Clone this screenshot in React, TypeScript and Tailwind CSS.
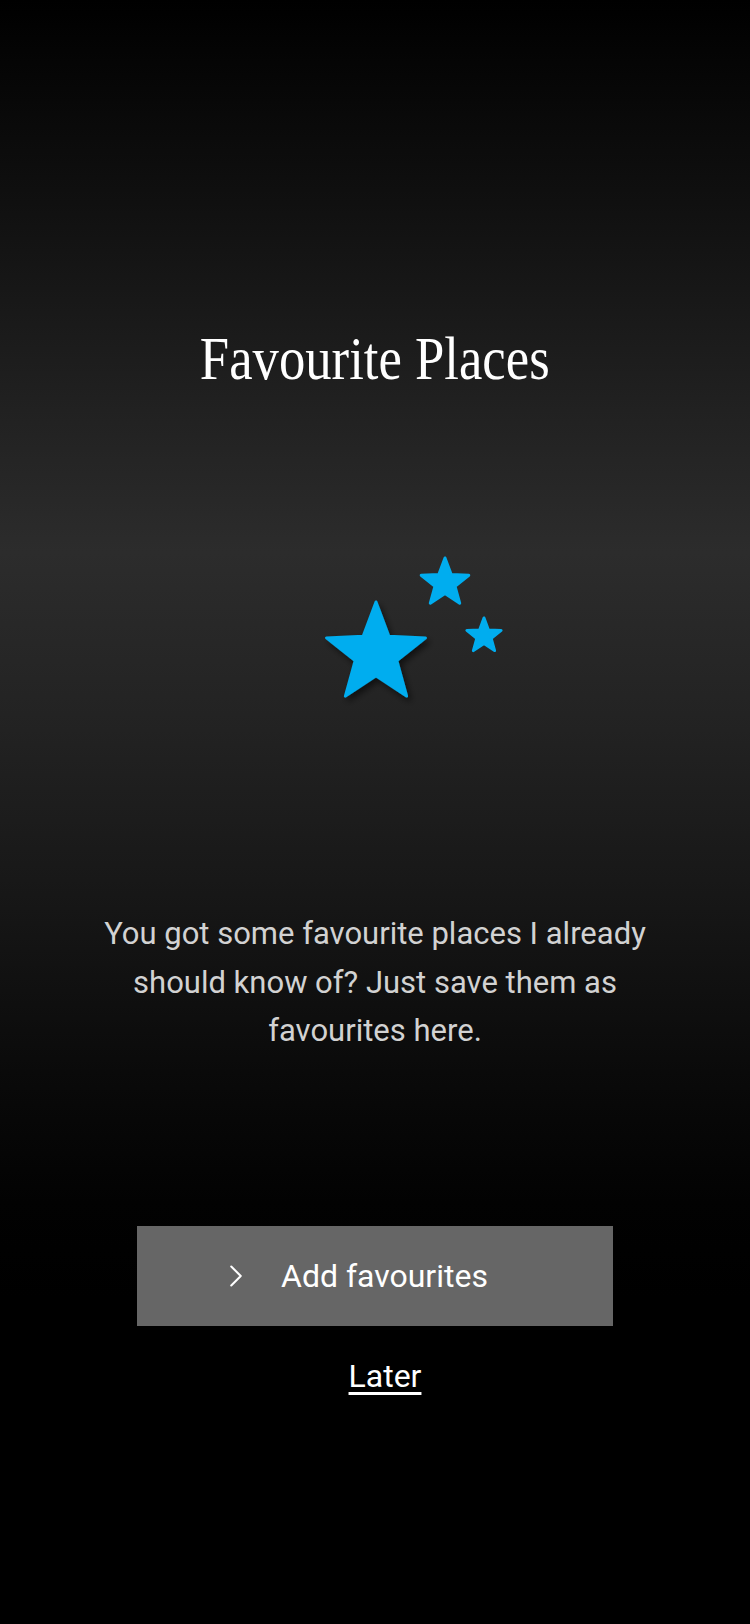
import { ChevronRight } from "lucide-react";

const sans = "font-['Roboto','Liberation_Sans',sans-serif]";

type StarProps = {
  cx: number;
  cy: number;
  r: number;
};

const starPoints = ({ cx, cy, r }: StarProps) => {
  const inner = r * 0.42;
  const pts: string[] = [];
  for (let i = 0; i < 10; i++) {
    const rad = i % 2 === 0 ? r : inner;
    const a = (Math.PI / 5) * i - Math.PI / 2;
    pts.push(`${(cx + rad * Math.cos(a)).toFixed(1)},${(cy + rad * Math.sin(a)).toFixed(1)}`);
  }
  return pts.join(" ");
};

const Stars = () => (
  <svg width="260" height="160" viewBox="0 0 260 160" className="block">
    <defs>
      <filter id="starShadow" x="-30%" y="-30%" width="160%" height="160%">
        <feDropShadow dx="3" dy="4" stdDeviation="3" floodColor="#000" floodOpacity="0.55" />
      </filter>
    </defs>
    <g fill="#00adef" stroke="#00adef" strokeWidth="3" strokeLinejoin="round">
      <polygon points={starPoints({ cx: 131, cy: 104, r: 52 })} filter="url(#starShadow)" />
      <polygon points={starPoints({ cx: 200, cy: 33, r: 25 })} />
      <polygon points={starPoints({ cx: 239, cy: 86, r: 18 })} />
    </g>
  </svg>
);

export default function App() {
  return (
    <div className="min-h-[1624px] w-[750px] bg-[linear-gradient(180deg,#000_0%,#121212_14%,#222_26%,#2c2c2c_34%,#232323_44%,#161616_56%,#0a0a0a_66%,#020202_74%,#000_80%)] flex flex-col items-center">
      <h1 className="mt-[326px] h-[64px] text-[62px] leading-[64px] text-white font-['Liberation_Serif',serif] font-normal scale-x-[0.85] whitespace-nowrap">
        Favourite Places
      </h1>

      <div className="mt-[160px]">
        <Stars />
      </div>

      <p
        className={`mt-[200px] w-[580px] text-center text-[31px] leading-[48.5px] text-[#d2d2d2] ${sans}`}
      >
        You got some favourite places I already should know of? Just save them as favourites here.
      </p>

      <button
        type="button"
        className={`mt-[170px] flex h-[100px] w-[476px] items-center bg-[#666] pl-[80px] text-[32px] text-white ${sans}`}
      >
        <ChevronRight className="h-[38px] w-[38px] shrink-0" strokeWidth={1.3} />
        <span className="ml-[26px]">Add favourites</span>
      </button>

      <button
        type="button"
        className={`mt-[27px] ml-[20px] text-[32px] leading-[47px] text-white underline decoration-[3px] underline-offset-[5px] ${sans}`}
      >
        Later
      </button>
    </div>
  );
}
